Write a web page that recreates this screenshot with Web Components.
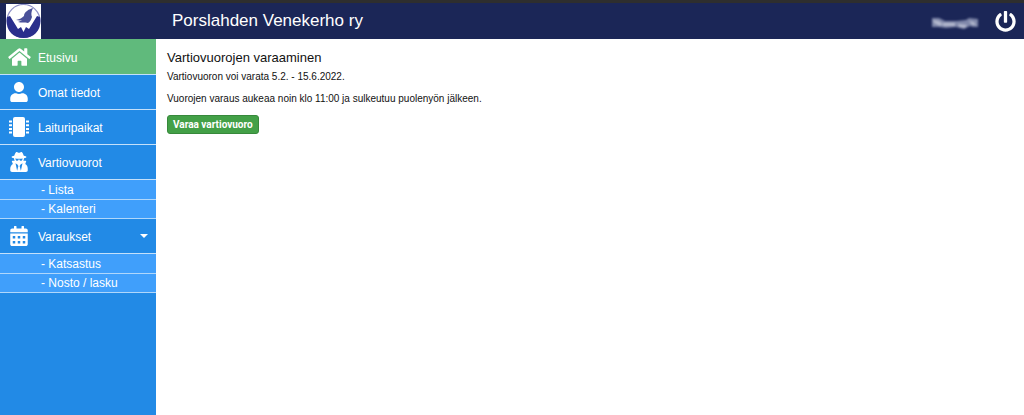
<!DOCTYPE html>
<html lang="fi">
<head>
<meta charset="utf-8">
<meta name="viewport" content="width=device-width, initial-scale=1">
<title>Porslahden Venekerho ry</title>
<style>
body { margin: 0; background: #fff; font-family: "Liberation Sans", Arial, sans-serif; }
</style>
</head>
<body>
<club-app>
  <club-header slot="header" heading="Porslahden Venekerho ry"></club-header>
  <side-nav slot="nav">
    <nav-item icon="home" active>Etusivu</nav-item>
    <nav-item icon="user">Omat tiedot</nav-item>
    <nav-item icon="chip">Laituripaikat</nav-item>
    <nav-item icon="guard">Vartiovuorot
      <nav-subitem slot="sub">- Lista</nav-subitem>
      <nav-subitem slot="sub">- Kalenteri</nav-subitem>
    </nav-item>
    <nav-item icon="calendar" caret>Varaukset
      <nav-subitem slot="sub">- Katsastus</nav-subitem>
      <nav-subitem slot="sub">- Nosto / lasku</nav-subitem>
    </nav-item>
  </side-nav>
  <shift-booking>
    <span slot="heading">Vartiovuorojen varaaminen</span>
    <span slot="period">Vartiovuoron voi varata 5.2. - 15.6.2022.</span>
    <span slot="info">Vuorojen varaus aukeaa noin klo 11:00 ja sulkeutuu puolenyön jälkeen.</span>
    <span slot="action">Varaa vartiovuoro</span>
  </shift-booking>
</club-app>
<script>
const ICONS = {
  home: '<svg viewBox="0 0 576 512" width="23" height="20"><path d="M280.37 148.26L96 300.11V464a16 16 0 0 0 16 16l112.06-.29a16 16 0 0 0 15.92-16V368a16 16 0 0 1 16-16h64a16 16 0 0 1 16 16v95.64a16 16 0 0 0 16 16.05L464 480a16 16 0 0 0 16-16V300L295.67 148.26a12.19 12.19 0 0 0-15.3 0zM571.6 251.47L488 182.56V44.05a12 12 0 0 0-12-12h-56a12 12 0 0 0-12 12v72.61L318.47 43a48 48 0 0 0-61 0L4.34 251.47a12 12 0 0 0-1.6 16.9l25.5 31A12 12 0 0 0 45.15 301l235.22-193.74a12.19 12.19 0 0 1 15.3 0L530.9 301a12 12 0 0 0 16.9-1.6l25.5-31a12 12 0 0 0-1.7-16.93z"/></svg>',
  user: '<svg viewBox="0 0 448 512" width="18" height="20"><path d="M224 256c70.7 0 128-57.3 128-128S294.7 0 224 0 96 57.3 96 128s57.3 128 128 128zm89.6 32h-16.7c-22.2 10.2-46.9 16-72.9 16s-50.6-5.8-72.9-16h-16.7C60.2 288 0 348.2 0 422.4V464c0 26.5 21.5 48 48 48h352c26.5 0 48-21.5 48-48v-41.6c0-74.2-60.2-134.4-134.4-134.4z"/></svg>',
  chip: '<svg viewBox="0 0 20 20" width="20" height="20"><rect x="4" y="0" width="12" height="20" rx="2"/><path d="M0 3.500h3v2H0zM0 7.200h3v2H0zM0 10.900h3v2H0zM0 14.600h3v2H0zM17 3.500h3v2h-3zM17 7.200h3v2h-3zM17 10.900h3v2h-3zM17 14.600h3v2h-3z"/></svg>',
  guard: '<svg viewBox="0 0 448 512" width="18" height="20"><path d="M383.9 308.3l23.9-62.6c4-10.5-3.7-21.7-15-21.7h-58.5c11-18.9 17.8-40.6 17.8-64v-.3c39.2-7.8 64-19.1 64-31.7 0-13.3-27.3-25.1-70.1-33-9.2-32.8-27-65.8-40.6-82.8-9.5-11.9-25.9-15.6-39.5-8.8l-27.6 13.8c-9 4.5-19.6 4.5-28.6 0L182.1 3.4c-13.6-6.8-30-3.1-39.5 8.8-13.5 17-31.4 50-40.6 82.8-42.7 7.9-70 19.7-70 33 0 12.6 24.8 23.9 64 31.7v.3c0 23.4 6.8 45.1 17.8 64H56.3c-11.5 0-19.2 11.7-14.7 22.3l25.8 60.2C27.3 329.8 0 372.7 0 422.4v44.8C0 491.9 20.1 512 44.8 512h358.4c24.7 0 44.8-20.1 44.8-44.8v-44.8c0-48.4-25.8-90.4-64.1-114.1zM176 480l-41.6-192 49.6 32 24 40-32 120zm96 0l-32-120 24-40 49.6-32L272 480zm41.7-298.5c-3.9 11.9-7 24.6-16.5 33.4-10.1 9.3-48 22.4-64-25-2.8-8.4-15.4-8.4-18.3 0-17 50.2-56 32.4-64 25-9.5-8.8-12.7-21.5-16.5-33.4-.8-2.5-6.3-5.7-6.3-5.8v-10.8c28.3 3.6 61 5.8 96 5.8s67.7-2.1 96-5.8v10.8c-.1.1-5.6 3.2-6.4 5.8z"/></svg>',
  calendar: '<svg viewBox="0 0 448 512" width="18" height="20"><path fill-rule="evenodd" d="M0 464c0 26 22 48 48 48h352c26 0 48-22 48-48V192H0zM64 256h64v64H64zM192 256h64v64h-64zM320 256h64v64h-64zM64 384h64v64H64zM192 384h64v64h-64zM320 384h64v64h-64zM400 64h-48V12c0-7-5-12-12-12h-40c-7 0-12 5-12 12v52H160V12c0-7-5-12-12-12h-40c-7 0-12 5-12 12v52H48C21 64 0 85 0 112v48h448v-48c0-27-21-48-48-48z"/></svg>'
};

function define(name, render) {
  customElements.define(name, class extends HTMLElement {
    constructor() {
      super();
      this.attachShadow({ mode: 'open' });
    }
    connectedCallback() {
      this.shadowRoot.innerHTML = render(this);
    }
  });
}

define('club-app', () => `
  <style>
    :host { display: flex; flex-direction: column; min-height: 100vh; }
    .body { display: flex; flex: 1; }
    aside { flex: 0 0 156px; display: flex; background: #228ae6; }
    main { flex: 1; min-width: 0; }
  </style>
  <slot name="header"></slot>
  <div class="body">
    <aside><slot name="nav"></slot></aside>
    <main><slot></slot></main>
  </div>`);

define('club-header', el => `
  <style>
    :host { display: block; background: #1b2657; border-top: 3px solid #2e2e2e; color: #fff; }
    header { display: flex; align-items: center; height: 36px; padding: 0 8px 0 6px; }
    .logo { display: block; width: 35px; height: 35px; margin-right: 131px; }
    .logo svg, button svg { display: block; }
    h1 { flex: 1; margin: 0; font-size: 17px; line-height: 20px; font-weight: 400; }
    .name { display: block; margin: 4px 14px 0 0; }
    button { padding: 0; border: 0; background: none; color: inherit; cursor: pointer; }
  </style>
  <header>
    <a class="logo" href="#" aria-label="Etusivulle">
      <svg viewBox="0 0 35 35" width="35" height="35">
        <path fill="#fff" d="M0 0h35v35H0z"/>
        <circle cx="17.5" cy="17" r="16.5" fill="#fff" stroke="#8d90c6" stroke-width="1.2"/>
        <path fill="#2a2f8c" d="M1 13L4 12 12 25 15 23 17.5 28 20 23 23 25 31 12 34 13C36 25 29 34 17.5 34S-1 25 1 13z"/>
        <path fill="#4a5199" d="M10 16c4-1 6-2 8-4 0-2 1-4 3-5 2-2 4-2 6-3-2 4-2 7-1 9-1 3-2 5-4 6-3-1-7 0-10-1 2-1 3-1 4-2-2 1-4 0-6 0z"/>
      </svg>
    </a>
    <h1>${el.getAttribute('heading')}</h1>
    <svg class="name" width="52" height="18" viewBox="0 0 52 18" aria-hidden="true">
      <defs><filter id="soft" color-interpolation-filters="sRGB"><feGaussianBlur stdDeviation="1.3"/></filter></defs>
      <g filter="url(#soft)">
        <path fill="#8088aa" d="M3 4h7l6 3 12 0 9-1 3-2 9 1v8h-5l-3-1-6 3-8-2-10 1-7-1H3z"/>
        <path fill="#b4b9ce" d="M4 6l6 1 4 3-3 2-6-3zM14 9h12v3H14zM29 10l9 1-2 3-6-1zM40 7l5 1 2 3h-4z"/>
      </g>
    </svg>
    <button type="button" aria-label="Kirjaudu ulos">
      <svg viewBox="0 0 512 512" width="21" height="21" fill="currentColor"><path d="M400 54.1c63 45 104 118.6 104 201.9 0 136.8-110.8 247.7-247.5 248C120 504.3 8.2 393 8 256.4 7.9 173.1 48.9 99.3 111.8 54.2c11.7-8.3 28-4.8 35 7.7L162.6 90c5.9 10.5 3.1 23.8-6.6 31-41.5 30.8-68 79.6-68 134.9-.1 92.3 74.5 168.1 168 168.1 91.6 0 168.6-74.2 168-169.1-.3-51.8-24.7-101.8-68.1-134-9.7-7.2-12.4-20.5-6.5-30.9l15.8-28.1c7-12.4 23.2-16.1 34.8-7.8zM296 264V24c0-13.3-10.7-24-24-24h-32c-13.3 0-24 10.7-24 24v240c0 13.3 10.7 24 24 24h32c13.3 0 24-10.7 24-24z"/></svg>
    </button>
  </header>`);

define('side-nav', () => `
  <style>
    :host { display: block; flex: 1; }
    nav { display: flex; flex-direction: column; }
  </style>
  <nav><slot></slot></nav>`);

define('nav-item', el => `
  <style>
    :host { display: block; }
    a { display: flex; align-items: center; box-sizing: border-box; height: 35px; padding: 0 8px; border-bottom: 1px solid #c4e0fa; color: #fff; font-size: 12px; line-height: 16px; text-decoration: none; }
    :host([active]) a { height: 36px; background: #60ba7c; }
    .icon { display: flex; justify-content: center; width: 22px; margin-right: 8px; }
    .icon svg { flex: none; fill: #fff; }
    .label { flex: 1; padding-top: 2px; }
    .caret { border: 4px solid transparent; border-top-color: #fff; border-bottom: 0; }
    .sub { display: flex; flex-direction: column; padding-top: 1px; background: #409ffb; }
  </style>
  <a href="#"><span class="icon">${ICONS[el.getAttribute('icon')]}</span><span class="label"><slot></slot></span>${el.hasAttribute('caret') ? '<span class="caret"></span>' : ''}</a>
  ${el.querySelector('[slot=sub]') ? '<div class="sub"><slot name="sub"></slot></div>' : ''}`);

define('nav-subitem', () => `
  <style>
    :host { display: block; }
    a { display: block; padding: 0 8px 0 41px; border-bottom: 1px solid #b0d7fb; color: #fff; font-size: 12px; line-height: 18px; text-decoration: none; }
  </style>
  <a href="#"><slot></slot></a>`);

define('shift-booking', () => `
  <style>
    :host { display: block; padding: 10px 11px; color: #111; }
    h2 { margin: 0 0 1px; font-size: 13px; line-height: 18px; font-weight: 400; }
    p { margin: 0 0 4px; font-size: 10px; line-height: 18px; }
    button { display: block; margin-top: 7px; padding: 0 5px; border: 1px solid #37893b; border-radius: 3px; background: #43a047; color: #fff; font: 700 10px/17px Roboto, Arial, sans-serif; cursor: pointer; }
  </style>
  <h2><slot name="heading"></slot></h2>
  <p><slot name="period"></slot></p>
  <p><slot name="info"></slot></p>
  <button type="button"><slot name="action"></slot></button>`);
</script>
</body>
</html>
